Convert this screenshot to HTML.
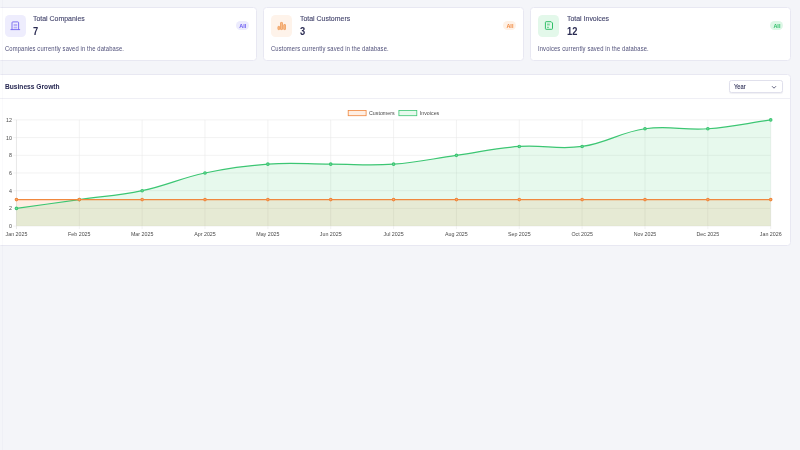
<!DOCTYPE html>
<html><head><meta charset="utf-8">
<style>
html,body{margin:0;padding:0;}
body{width:800px;height:450px;overflow:hidden;background:#f4f5f9;position:relative;font-family:"Liberation Sans",sans-serif;}
.card{will-change:transform;position:absolute;top:7px;width:259.3px;height:54px;box-sizing:border-box;background:#fff;border:1px solid #e8e8f2;border-radius:3.5px;}
.ibox{position:absolute;left:6.6px;top:7.4px;width:21.2px;height:21.2px;border-radius:4.5px;}
.ibox svg{position:absolute;left:0;top:0;}
.title{position:absolute;left:34.6px;top:7px;font-size:7.9px;line-height:8px;color:#44456d;-webkit-text-stroke:0.12px #44456d;white-space:nowrap;transform:translateY(0.45px) scaleX(0.88);transform-origin:0 0;}
.val{position:absolute;left:34.8px;top:18.1px;font-size:10px;line-height:12px;font-weight:bold;color:#2a2b52;white-space:nowrap;transform:scaleX(0.93);transform-origin:0 0;}
.desc{position:absolute;left:6.6px;top:37.1px;font-size:6.3px;line-height:7px;letter-spacing:0.14px;transform:scaleX(0.925);transform-origin:0 0;color:#50507a;white-space:nowrap;}
.badge{position:absolute;right:6.5px;top:13.3px;width:13px;height:9px;border-radius:5px;font-size:5.5px;line-height:10.6px;text-align:center;font-weight:bold;}
.chartcard{will-change:transform;position:absolute;left:-3.2px;top:74px;width:794.2px;height:172px;box-sizing:border-box;background:#fff;border:1px solid #e8e8f2;border-radius:3.5px;}
.hdr{position:absolute;left:0;top:0;right:0;height:23.3px;border-bottom:1px solid #efeff5;}
.htitle{position:absolute;left:6.7px;top:7.6px;font-size:7.1px;line-height:8px;font-weight:bold;color:#262752;white-space:nowrap;transform:scaleX(0.935);transform-origin:0 0;}
.sel{position:absolute;left:730.9px;top:5px;width:54.2px;height:13px;box-sizing:border-box;border:1px solid #e0e0ec;border-radius:2.5px;box-shadow:0 1px 1px rgba(40,40,90,0.07);background:#fff;}
.sel span{position:absolute;left:4.2px;top:2.2px;font-size:6.6px;line-height:7px;color:#2b2d55;-webkit-text-stroke:0.1px #2b2d55;transform:scaleX(0.87);transform-origin:0 0;}
.sel svg{position:absolute;left:40.8px;top:3.6px;}
svg.chart{position:absolute;left:0;top:0;will-change:transform;}
.ax{font-family:"Liberation Sans",sans-serif;font-size:5.3px;fill:#4a4a4a;}
.vline{position:absolute;left:2px;top:0;width:1px;height:450px;background:rgba(150,150,190,0.05);z-index:5;}
</style></head><body>
<div class="card" style="left:-3.2px;width:259.7px">
  <div class="ibox" style="background:#eeedfd"><svg width="22" height="22" viewBox="0 0 22 22"><path d="M7.0,14.6 V7.7 Q7.0,6.9 7.8,6.9 H12.8 Q13.6,6.9 13.6,7.7 V14.6" fill="none" stroke="#6c5cf0" stroke-width="0.85"/><line x1="5.5" y1="14.6" x2="15.1" y2="14.6" stroke="#6c5cf0" stroke-width="0.85"/><rect x="8.6" y="9.0" width="3.6" height="2.3" fill="#b9b1f8"/><line x1="8.6" y1="12.8" x2="12.2" y2="12.8" stroke="#9085f4" stroke-width="0.8"/></svg></div>
  <div class="title" style="left:34.60px">Total Companies</div>
  <div class="val" style="left:34.80px">7</div>
  <div class="desc">Companies currently saved in the database.</div>
  <div class="badge" style="background:#ecebfd;color:#6a5cf0">All</div>
</div>
<div class="card" style="left:263.3px;width:260.9px">
  <div class="ibox" style="background:#fef3ea"><svg width="22" height="22" viewBox="0 0 22 22"><g fill="#f6bd8c" stroke="#ef8a3a" stroke-width="0.6"><rect x="6.9" y="11.4" width="1.8" height="3.2" rx="0.4"/><rect x="9.5" y="7.4" width="2.0" height="7.2" rx="0.5"/><rect x="12.7" y="9.5" width="1.8" height="5.1" rx="0.4"/></g></svg></div>
  <div class="title" style="left:35.62px">Total Customers</div>
  <div class="val" style="left:35.50px">3</div>
  <div class="desc">Customers currently saved in the database.</div>
  <div class="badge" style="background:#fef1e6;color:#f0883e">All</div>
</div>
<div class="card" style="left:530.0px;width:260.9px">
  <div class="ibox" style="background:#e3f8ea"><svg width="22" height="22" viewBox="0 0 22 22"><path d="M7.4,7.4 Q7.4,6.7 8.1,6.7 H13.2 L14.5,8.0 V13.6 Q14.5,14.3 13.8,14.3 H8.1 Q7.4,14.3 7.4,13.6 Z" fill="none" stroke="#2fbf67" stroke-width="1.0"/><rect x="9.0" y="8.5" width="2.8" height="2.0" fill="#86d9a3"/><line x1="9.0" y1="12.3" x2="10.9" y2="12.3" stroke="#4cc77c" stroke-width="0.9"/></svg></div>
  <div class="title" style="left:35.62px">Total Invoices</div>
  <div class="val" style="left:35.50px">12</div>
  <div class="desc">Invoices currently saved in the database.</div>
  <div class="badge" style="background:#ddf7e6;color:#30c06a">All</div>
</div>
<div class="chartcard">
  <div class="hdr"><div class="htitle">Business Growth</div>
  <div class="sel"><span>Year</span><svg width="6" height="5" viewBox="0 0 6 5"><path d="M1,1.2 L3,3.2 L5,1.2" fill="none" stroke="#33345a" stroke-width="0.75"/></svg></div></div>
</div>
<div class="vline"></div>
<svg class="chart" width="800" height="450" viewBox="0 0 800 450">
<line x1="13.3" y1="226.10" x2="770.70" y2="226.10" stroke="#e9e9e9" stroke-width="0.6"/>
<line x1="13.3" y1="208.40" x2="770.70" y2="208.40" stroke="#e9e9e9" stroke-width="0.6"/>
<line x1="13.3" y1="190.70" x2="770.70" y2="190.70" stroke="#e9e9e9" stroke-width="0.6"/>
<line x1="13.3" y1="173.00" x2="770.70" y2="173.00" stroke="#e9e9e9" stroke-width="0.6"/>
<line x1="13.3" y1="155.30" x2="770.70" y2="155.30" stroke="#e9e9e9" stroke-width="0.6"/>
<line x1="13.3" y1="137.60" x2="770.70" y2="137.60" stroke="#e9e9e9" stroke-width="0.6"/>
<line x1="13.3" y1="119.90" x2="770.70" y2="119.90" stroke="#e9e9e9" stroke-width="0.6"/>
<line x1="16.44" y1="119.90" x2="16.44" y2="229.10" stroke="#d9d9d9" stroke-width="0.6"/>
<line x1="79.30" y1="119.90" x2="79.30" y2="229.10" stroke="#e9e9e9" stroke-width="0.6"/>
<line x1="142.15" y1="119.90" x2="142.15" y2="229.10" stroke="#e9e9e9" stroke-width="0.6"/>
<line x1="205.00" y1="119.90" x2="205.00" y2="229.10" stroke="#e9e9e9" stroke-width="0.6"/>
<line x1="267.86" y1="119.90" x2="267.86" y2="229.10" stroke="#e9e9e9" stroke-width="0.6"/>
<line x1="330.71" y1="119.90" x2="330.71" y2="229.10" stroke="#e9e9e9" stroke-width="0.6"/>
<line x1="393.57" y1="119.90" x2="393.57" y2="229.10" stroke="#e9e9e9" stroke-width="0.6"/>
<line x1="456.42" y1="119.90" x2="456.42" y2="229.10" stroke="#e9e9e9" stroke-width="0.6"/>
<line x1="519.28" y1="119.90" x2="519.28" y2="229.10" stroke="#e9e9e9" stroke-width="0.6"/>
<line x1="582.13" y1="119.90" x2="582.13" y2="229.10" stroke="#e9e9e9" stroke-width="0.6"/>
<line x1="644.99" y1="119.90" x2="644.99" y2="229.10" stroke="#e9e9e9" stroke-width="0.6"/>
<line x1="707.85" y1="119.90" x2="707.85" y2="229.10" stroke="#e9e9e9" stroke-width="0.6"/>
<line x1="770.70" y1="119.90" x2="770.70" y2="229.10" stroke="#e9e9e9" stroke-width="0.6"/>
<path d="M16.44,199.55 L770.70,199.55 L770.70,226.10 L16.44,226.10 Z" fill="rgba(249,115,22,0.12)"/>
<path d="M16.44,208.40 C41.58,204.86 54.15,203.09 79.30,199.55 C104.44,196.01 117.36,195.93 142.15,190.70 C167.65,185.31 179.51,178.39 205.00,173.00 C229.79,167.77 242.59,165.93 267.86,164.15 C292.88,162.39 305.57,164.15 330.71,164.15 C355.86,164.15 368.55,165.91 393.57,164.15 C418.84,162.37 431.28,158.84 456.42,155.30 C481.57,151.76 494.01,148.23 519.28,146.45 C544.30,144.69 557.47,149.92 582.13,146.45 C607.76,142.84 619.37,132.36 644.99,128.75 C669.65,125.28 682.83,130.51 707.85,128.75 C733.11,126.97 745.56,123.44 770.70,119.90 L770.70,226.10 L16.44,226.10 Z" fill="rgba(34,197,94,0.11)"/>
<path d="M16.44,208.40 C41.58,204.86 54.15,203.09 79.30,199.55 C104.44,196.01 117.36,195.93 142.15,190.70 C167.65,185.31 179.51,178.39 205.00,173.00 C229.79,167.77 242.59,165.93 267.86,164.15 C292.88,162.39 305.57,164.15 330.71,164.15 C355.86,164.15 368.55,165.91 393.57,164.15 C418.84,162.37 431.28,158.84 456.42,155.30 C481.57,151.76 494.01,148.23 519.28,146.45 C544.30,144.69 557.47,149.92 582.13,146.45 C607.76,142.84 619.37,132.36 644.99,128.75 C669.65,125.28 682.83,130.51 707.85,128.75 C733.11,126.97 745.56,123.44 770.70,119.90" fill="none" stroke="#3cc673" stroke-width="1.2"/>
<circle cx="16.44" cy="208.40" r="1.25" fill="#7ad9a0" stroke="#3cc673" stroke-width="1.15"/>
<circle cx="79.30" cy="199.55" r="1.25" fill="#7ad9a0" stroke="#3cc673" stroke-width="1.15"/>
<circle cx="142.15" cy="190.70" r="1.25" fill="#7ad9a0" stroke="#3cc673" stroke-width="1.15"/>
<circle cx="205.00" cy="173.00" r="1.25" fill="#7ad9a0" stroke="#3cc673" stroke-width="1.15"/>
<circle cx="267.86" cy="164.15" r="1.25" fill="#7ad9a0" stroke="#3cc673" stroke-width="1.15"/>
<circle cx="330.71" cy="164.15" r="1.25" fill="#7ad9a0" stroke="#3cc673" stroke-width="1.15"/>
<circle cx="393.57" cy="164.15" r="1.25" fill="#7ad9a0" stroke="#3cc673" stroke-width="1.15"/>
<circle cx="456.42" cy="155.30" r="1.25" fill="#7ad9a0" stroke="#3cc673" stroke-width="1.15"/>
<circle cx="519.28" cy="146.45" r="1.25" fill="#7ad9a0" stroke="#3cc673" stroke-width="1.15"/>
<circle cx="582.13" cy="146.45" r="1.25" fill="#7ad9a0" stroke="#3cc673" stroke-width="1.15"/>
<circle cx="644.99" cy="128.75" r="1.25" fill="#7ad9a0" stroke="#3cc673" stroke-width="1.15"/>
<circle cx="707.85" cy="128.75" r="1.25" fill="#7ad9a0" stroke="#3cc673" stroke-width="1.15"/>
<circle cx="770.70" cy="119.90" r="1.25" fill="#7ad9a0" stroke="#3cc673" stroke-width="1.15"/>
<path d="M16.44,199.55 L770.70,199.55" fill="none" stroke="#f0883e" stroke-width="1.2"/>
<circle cx="16.44" cy="199.55" r="1.25" fill="#f5b079" stroke="#f0883e" stroke-width="1.15"/>
<circle cx="79.30" cy="199.55" r="1.25" fill="#f5b079" stroke="#f0883e" stroke-width="1.15"/>
<circle cx="142.15" cy="199.55" r="1.25" fill="#f5b079" stroke="#f0883e" stroke-width="1.15"/>
<circle cx="205.00" cy="199.55" r="1.25" fill="#f5b079" stroke="#f0883e" stroke-width="1.15"/>
<circle cx="267.86" cy="199.55" r="1.25" fill="#f5b079" stroke="#f0883e" stroke-width="1.15"/>
<circle cx="330.71" cy="199.55" r="1.25" fill="#f5b079" stroke="#f0883e" stroke-width="1.15"/>
<circle cx="393.57" cy="199.55" r="1.25" fill="#f5b079" stroke="#f0883e" stroke-width="1.15"/>
<circle cx="456.42" cy="199.55" r="1.25" fill="#f5b079" stroke="#f0883e" stroke-width="1.15"/>
<circle cx="519.28" cy="199.55" r="1.25" fill="#f5b079" stroke="#f0883e" stroke-width="1.15"/>
<circle cx="582.13" cy="199.55" r="1.25" fill="#f5b079" stroke="#f0883e" stroke-width="1.15"/>
<circle cx="644.99" cy="199.55" r="1.25" fill="#f5b079" stroke="#f0883e" stroke-width="1.15"/>
<circle cx="707.85" cy="199.55" r="1.25" fill="#f5b079" stroke="#f0883e" stroke-width="1.15"/>
<circle cx="770.70" cy="199.55" r="1.25" fill="#f5b079" stroke="#f0883e" stroke-width="1.15"/>
<text x="12" y="228.00" text-anchor="end" class="ax">0</text>
<text x="12" y="210.30" text-anchor="end" class="ax">2</text>
<text x="12" y="192.60" text-anchor="end" class="ax">4</text>
<text x="12" y="174.90" text-anchor="end" class="ax">6</text>
<text x="12" y="157.20" text-anchor="end" class="ax">8</text>
<text x="12" y="139.50" text-anchor="end" class="ax">10</text>
<text x="12" y="121.80" text-anchor="end" class="ax">12</text>
<text x="16.44" y="236" text-anchor="middle" class="ax">Jan 2025</text>
<text x="79.30" y="236" text-anchor="middle" class="ax">Feb 2025</text>
<text x="142.15" y="236" text-anchor="middle" class="ax">Mar 2025</text>
<text x="205.00" y="236" text-anchor="middle" class="ax">Apr 2025</text>
<text x="267.86" y="236" text-anchor="middle" class="ax">May 2025</text>
<text x="330.71" y="236" text-anchor="middle" class="ax">Jun 2025</text>
<text x="393.57" y="236" text-anchor="middle" class="ax">Jul 2025</text>
<text x="456.42" y="236" text-anchor="middle" class="ax">Aug 2025</text>
<text x="519.28" y="236" text-anchor="middle" class="ax">Sep 2025</text>
<text x="582.13" y="236" text-anchor="middle" class="ax">Oct 2025</text>
<text x="644.99" y="236" text-anchor="middle" class="ax">Nov 2025</text>
<text x="707.85" y="236" text-anchor="middle" class="ax">Dec 2025</text>
<text x="770.70" y="236" text-anchor="middle" class="ax">Jan 2026</text>
<rect x="348.2" y="110.4" width="17.9" height="5.3" fill="rgba(249,115,22,0.12)" stroke="#f0883e" stroke-width="0.8"/>
<text x="369" y="114.9" class="ax">Customers</text>
<rect x="398.9" y="110.4" width="17.9" height="5.3" fill="rgba(34,197,94,0.11)" stroke="#3cc673" stroke-width="0.8"/>
<text x="419.8" y="114.9" class="ax">Invoices</text>
</svg>
</body></html>
